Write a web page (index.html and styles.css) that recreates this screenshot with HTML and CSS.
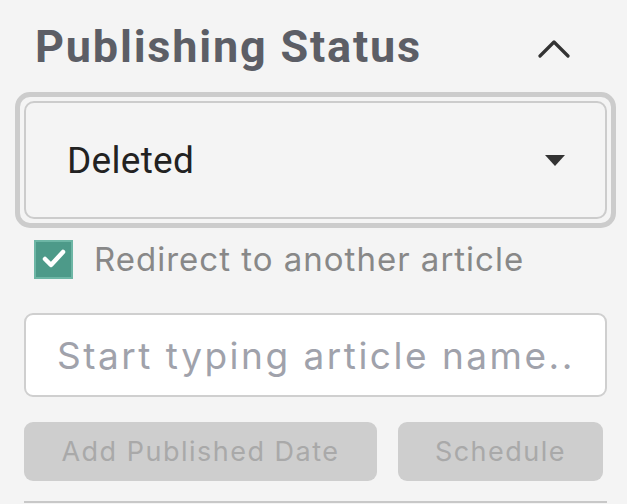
FILE: index.html
```html
<!DOCTYPE html>
<html>
<head>
<meta charset="utf-8">
<link rel="stylesheet" href="styles.css">
</head>
<body>
<div class="panel">
  <div class="header">
    <h2 class="title">Publishing Status</h2>
    <svg class="chevron" width="32" height="18" viewBox="0 0 32 18"><path d="M2 16 L16 2 L30 16" fill="none" stroke="#333" stroke-width="3.2" stroke-linecap="round" stroke-linejoin="round"/></svg>
  </div>
  <div class="select-ring">
    <div class="select">
      <span class="select-value">Deleted</span>
      <svg class="caret" width="20" height="11" viewBox="0 0 20 11"><path d="M0 0 H20 L10 11 Z" fill="#333"/></svg>
    </div>
  </div>
  <label class="check-row">
    <span class="checkbox"><svg width="26" height="22" viewBox="0 0 26 22"><path d="M4 11 L10 17 L22 4" fill="none" stroke="#fff" stroke-width="4.5" stroke-linecap="round" stroke-linejoin="round"/></svg></span>
    <span class="check-label">Redirect to another article</span>
  </label>
  <div class="input">Start typing article name..</div>
  <div class="buttons">
    <button class="btn btn-wide">Add Published Date</button>
    <button class="btn btn-narrow">Schedule</button>
  </div>
  <div class="divider"></div>
</div>
</body>
</html>
```
FILE: styles.css
```css
html, body { margin: 0; padding: 0; background: #f4f4f4; }
.panel { padding: 0 20px 0 24px; display: flex; flex-direction: column; height: 504px; overflow: hidden; }
.header { display: flex; align-items: center; justify-content: space-between; height: 92px; padding-left: 11px; padding-right: 37px; }
.title { margin: 0; font-family: Roboto, sans-serif; font-weight: 700; font-size: 45px; color: #5c5e66; letter-spacing: 1.8px; }
.chevron { display: block; margin-top: 6px; }
.select-ring { margin: 0 -9px 0 -9px; border: 5px solid #cccccc; border-radius: 15px; padding: 4px; background: #f4f4f4; }
.select { height: 114px; border: 2px solid #cccccc; border-radius: 10px; display: flex; align-items: center; justify-content: space-between; padding: 0 40px 0 41px; }
.select-value { font-family: Roboto, sans-serif; font-size: 37px; color: #222; letter-spacing: 0.3px; }
.caret { display: block; }
.check-row { display: flex; align-items: center; gap: 21px; margin-top: 11px; padding-left: 10px; }
.checkbox { width: 35px; height: 35px; background: #4d9a89; border: 2px solid #6db6a5; display: flex; align-items: center; justify-content: center; }
.check-label { font-family: Inter, sans-serif; font-size: 33px; color: #888888; letter-spacing: 1px; }
.input { margin-top: 34px; height: 80px; border: 2px solid #cfcfcf; border-radius: 9px; background: #fff; display: flex; align-items: center; padding-left: 31px; font-family: Inter, sans-serif; font-size: 37px; color: #a0a2ab; letter-spacing: 2.5px; white-space: nowrap; overflow: hidden; }
.buttons { display: flex; gap: 21px; margin-top: 25px; }
.btn { height: 59px; border: none; border-radius: 9px; background: #cecece; color: #a9a9a9; font-family: Inter, sans-serif; font-size: 27px; letter-spacing: 1.5px; padding: 0; }
.btn-wide { width: 353px; }
.btn-narrow { width: 205px; }
.divider { margin-top: 20px; height: 2px; background: #c8c8c8; }
```
